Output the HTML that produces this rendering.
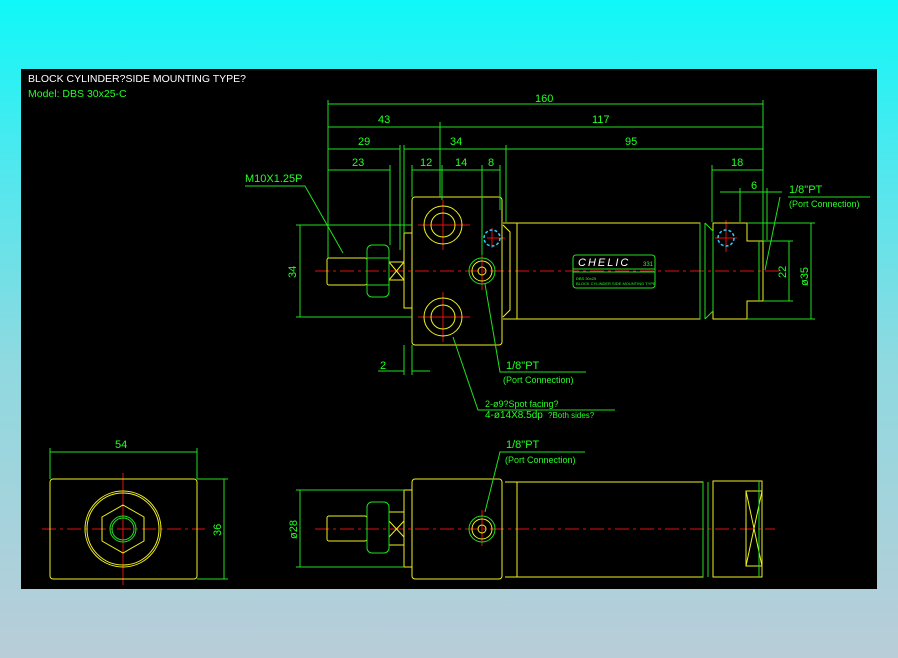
<!DOCTYPE html>
<html><head><meta charset="utf-8"><style>
html,body{margin:0;padding:0;width:898px;height:658px;overflow:hidden;background:linear-gradient(#0ff8f8 0%,#4fe8ee 25%,#8fd9e0 55%,#b9cdd8 100%);}
svg{position:absolute;left:0;top:0}
text{font-family:"Liberation Sans",sans-serif;}
</style></head><body>
<svg width="898" height="658" viewBox="0 0 898 658">
<rect x="21" y="69" width="856" height="520" fill="#000"/>
<text x="28" y="82" fill="#fff" font-size="10.5">BLOCK CYLINDER?SIDE MOUNTING TYPE?</text>
<text x="28" y="97" fill="#2f2" font-size="10.5">Model: DBS 30x25-C</text>

<g stroke="#e01010" stroke-width="1" stroke-dasharray="14,4,3,4" fill="none">
<line x1="315" y1="271" x2="780" y2="271"/>
<line x1="315" y1="529" x2="775" y2="529"/>
<line x1="42" y1="529" x2="205" y2="529"/>
</g>
<g stroke="#e01010" stroke-width="1" fill="none">
<line x1="443" y1="200" x2="443" y2="250"/><line x1="418" y1="225" x2="470" y2="225"/>
<line x1="443" y1="292" x2="443" y2="342"/><line x1="418" y1="317" x2="470" y2="317"/>
<line x1="482" y1="252" x2="482" y2="290"/>
<line x1="487" y1="238" x2="505" y2="238"/><line x1="492" y1="228" x2="492" y2="248"/>
<line x1="715" y1="238" x2="737" y2="238"/><line x1="726" y1="220" x2="726" y2="252"/>
<line x1="123" y1="473" x2="123" y2="585"/>
<line x1="482" y1="510" x2="482" y2="546"/>
</g>

<!-- yellow geometry -->
<g stroke="#f0f020" stroke-width="1" fill="none">
<rect x="412" y="197" width="90" height="148" rx="3"/>
<circle cx="443" cy="225" r="19"/><circle cx="443" cy="225" r="12"/>
<circle cx="443" cy="317" r="19"/><circle cx="443" cy="317" r="12"/>
<circle cx="482" cy="271" r="10"/><circle cx="482" cy="271" r="4"/>
<rect x="327" y="258" width="40" height="27" rx="2"/>
<rect x="389" y="262" width="15" height="18"/><path d="M389 262L404 280M404 262L389 280"/>
<path d="M412 233H404V308H412"/>
<path d="M503 223H517V319H503M517 223H700V319H517M713 223H747V241H763V301H747V319H713Z"/>
<path d="M503 225L510 232V310L503 317"/>
<rect x="50" y="479" width="147" height="100" rx="3"/>
<circle cx="123" cy="529" r="38"/><circle cx="123" cy="529" r="36"/>
<polygon points="123,505 144,517 144,541 123,553 102,541 102,517"/>
<rect x="412" y="479" width="90" height="100" rx="3"/>
<circle cx="482" cy="529" r="10"/><circle cx="482" cy="529" r="4"/>
<rect x="327" y="516" width="40" height="25" rx="2"/>
<rect x="389" y="512" width="15" height="33"/><path d="M389 521L404 537M404 521L389 537"/>
<path d="M412 490H404V567H412"/>
<path d="M505 482H517V577H505M517 482H703V577H517M713 481H762V577H713Z"/>
<rect x="746" y="491" width="16" height="75"/><path d="M746 491L762 566M762 491L746 566"/>
</g>

<!-- green geometry -->
<g stroke="#20e020" stroke-width="1" fill="none">
<circle cx="482" cy="271" r="13"/>
<rect x="367" y="245" width="22" height="52" rx="5"/><line x1="367" y1="258" x2="389" y2="258"/><line x1="367" y1="285" x2="389" y2="285"/>
<line x1="700" y1="223" x2="700" y2="319"/><line x1="705" y1="223" x2="705" y2="319"/><path d="M705 223L713 231V311L705 319"/>
<line x1="759" y1="241" x2="759" y2="301"/>
<rect x="573" y="255" width="82" height="33" rx="3"/><line x1="573" y1="269" x2="655" y2="269"/><line x1="573" y1="272" x2="655" y2="272"/>
<circle cx="123" cy="529" r="13"/><circle cx="123" cy="529" r="11"/>
<circle cx="482" cy="529" r="13"/>
<rect x="367" y="502" width="22" height="51" rx="5"/>
<line x1="703" y1="482" x2="703" y2="577"/><line x1="708" y1="482" x2="708" y2="577"/>
<line x1="759" y1="481" x2="759" y2="577"/>
<!-- dimension lines -->
<path d="M328 104H763M328 127H763M328 149H400M404 149H763M328 170H390M412 170H500M712 170H763M720 192H782"/>
<path d="M328 100V258M763 100V241M440 122V197M400 145V250M404 145V233M390 165V245M412 165V197M442 165V200M482 165V255M500 165V210M506 145V222M712 165V222M740 188V222M767 188V240"/>
<path d="M300 225V317M296 225H412M296 317H412M789 241V301M763 241H793M763 301H793M811 223V319M747 223H815M747 319H815"/>
<path d="M378 371H404M412 371H430M404 345V375M412 345V375"/>
<path d="M50 452H197M50 448V479M197 448V479M224 479V579M197 479H228M197 579H228"/>
<path d="M300 490V567M296 490H404M296 567H404"/>
<!-- leaders -->
<path d="M245 186H305L343 253"/>
<path d="M788 197H870M780 197L765 270"/>
<path d="M485 284L500 372H586"/>
<path d="M453 337L478 410H615"/>
<path d="M485 512L500 452H585"/>
</g>
<circle cx="492" cy="238" r="8" stroke="#30c8ff" stroke-width="1.5" stroke-dasharray="3,2" fill="none"/>
<circle cx="726" cy="238" r="8" stroke="#30c8ff" stroke-width="1.5" stroke-dasharray="3,2" fill="none"/>

<g fill="#2f2" font-size="11">
<text x="535" y="102">160</text>
<text x="378" y="123">43</text><text x="592" y="123">117</text>
<text x="358" y="145">29</text><text x="450" y="145">34</text><text x="625" y="145">95</text>
<text x="352" y="166">23</text><text x="420" y="166">12</text><text x="455" y="166">14</text><text x="488" y="166">8</text><text x="731" y="166">18</text>
<text x="751" y="189">6</text>
<text x="245" y="182">M10X1.25P</text>
<text x="789" y="193">1/8"PT</text><text x="789" y="207" font-size="9">(Port Connection)</text>
<text x="506" y="369">1/8"PT</text><text x="503" y="383" font-size="9">(Port Connection)</text>
<text x="485" y="407" font-size="9">2-ø9?Spot facing?</text><text x="485" y="418" font-size="10">4-ø14X8.5dp</text><text x="548" y="418" font-size="8">?Both sides?</text>
<text x="380" y="369">2</text>
<text x="506" y="448">1/8"PT</text><text x="505" y="463" font-size="9">(Port Connection)</text>
<text x="115" y="448">54</text>
<text transform="translate(296,278) rotate(-90)">34</text>
<text transform="translate(786,278) rotate(-90)">22</text>
<text transform="translate(808,286) rotate(-90)">ø35</text>
<text transform="translate(221,536) rotate(-90)">36</text>
<text transform="translate(297,539) rotate(-90)">ø28</text>
<text x="578" y="266" fill="#fff" font-size="11" font-style="italic" letter-spacing="2">CHELIC</text>
<text x="643" y="266" font-size="6">331</text>
<text x="576" y="280" font-size="4">DBS 30x25</text>
<text x="576" y="285" font-size="4">BLOCK CYLINDER SIDE MOUNTING TYPE</text>
</g>
</svg>
</body></html>
